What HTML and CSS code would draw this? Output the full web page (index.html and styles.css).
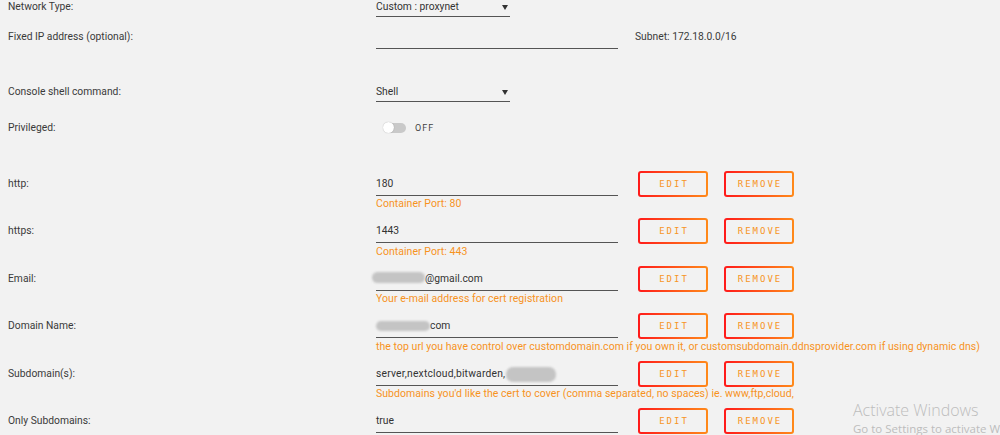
FILE: index.html
```html
<!DOCTYPE html>
<html lang="en">
<head>
<meta charset="utf-8">
<title>Container settings</title>
<link rel="stylesheet" href="styles.css">
</head>
<body>
<div class="form">
  <div class="row row-network">
    <div class="label">Network Type:</div>
    <div class="select select-network">
      <span>Custom : proxynet</span>
      <svg class="caret" width="6" height="6" viewBox="0 0 6 6"><path d="M0 1h6L3 6z" fill="#333"/></svg>
    </div>
  </div>

  <div class="row row-ip">
    <div class="label">Fixed IP address (optional):</div>
    <div class="input"></div>
    <div class="subnet">Subnet: 172.18.0.0/16</div>
  </div>

  <div class="row row-shell">
    <div class="label">Console shell command:</div>
    <div class="select">
      <span>Shell</span>
      <svg class="caret" width="6" height="6" viewBox="0 0 6 6"><path d="M0 1h6L3 6z" fill="#333"/></svg>
    </div>
  </div>

  <div class="row row-priv">
    <div class="label">Privileged:</div>
    <div class="toggle"><span class="track"><span class="knob"></span></span><span class="toggle-text">OFF</span></div>
  </div>

  <div class="vars">
    <div class="var">
      <div class="var-line">
        <div class="label">http:</div>
        <div class="input">180</div>
        <div class="actions"><button class="btn">EDIT</button><button class="btn">REMOVE</button></div>
      </div>
      <div class="hint">Container Port: 80</div>
    </div>

    <div class="var">
      <div class="var-line">
        <div class="label">https:</div>
        <div class="input">1443</div>
        <div class="actions"><button class="btn">EDIT</button><button class="btn">REMOVE</button></div>
      </div>
      <div class="hint">Container Port: 443</div>
    </div>

    <div class="var">
      <div class="var-line">
        <div class="label">Email:</div>
        <div class="input"><span class="redact redact-email"></span>@gmail.com</div>
        <div class="actions"><button class="btn">EDIT</button><button class="btn">REMOVE</button></div>
      </div>
      <div class="hint">Your e-mail address for cert registration</div>
    </div>

    <div class="var">
      <div class="var-line">
        <div class="label">Domain Name:</div>
        <div class="input"><span class="redact redact-domain"></span>com</div>
        <div class="actions"><button class="btn">EDIT</button><button class="btn">REMOVE</button></div>
      </div>
      <div class="hint">the top url you have control over customdomain.com if you own it, or customsubdomain.ddnsprovider.com if using dynamic dns)</div>
    </div>

    <div class="var">
      <div class="var-line">
        <div class="label">Subdomain(s):</div>
        <div class="input input-list">server,nextcloud,bitwarden,<span class="redact redact-sub"></span></div>
        <div class="actions"><button class="btn">EDIT</button><button class="btn">REMOVE</button></div>
      </div>
      <div class="hint">Subdomains you'd like the cert to cover (comma separated, no spaces) ie. www,ftp,cloud,</div>
    </div>

    <div class="var var-last">
      <div class="var-line">
        <div class="label">Only Subdomains:</div>
        <div class="input">true</div>
        <div class="actions"><button class="btn">EDIT</button><button class="btn">REMOVE</button></div>
      </div>
    </div>
  </div>
</div>

<div class="activate">
  <div class="activate-title">Activate Windows</div>
  <div class="activate-sub">Go to Settings to activate Windows.</div>
</div>
</body>
</html>
```

FILE: styles.css
```css
html, body {
  margin: 0;
  padding: 0;
  background: #f2f2f2;
  overflow: hidden;
  width: 1000px;
  height: 435px;
}

body {
  font-family: Roboto, "Liberation Sans", sans-serif;
  font-size: 10.3px;
  color: #3a3a3a;
}

.form {
  padding: 0 0 0 8px;
  margin-top: -3px;
}

.row {
  display: flex;
  align-items: flex-start;
}

.label {
  width: 368px;
  flex: none;
  line-height: 20px;
  color: #3a3a3a;
}

.select,
.input {
  box-sizing: border-box;
  height: 22px;
  line-height: 20px;
  border-bottom: 1px solid #555;
  color: #333;
  white-space: nowrap;
}

.select {
  width: 134px;
  display: flex;
  align-items: center;
  justify-content: space-between;
  padding-right: 2px;
  height: 20px;
}

.caret {
  display: block;
  margin-top: 1px;
}

.input {
  width: 242px;
}

.row-ip {
  margin-top: 10px;
}

.subnet {
  margin-left: 17px;
  line-height: 20px;
  color: #3a3a3a;
}

.row-shell {
  margin-top: 33px;
}

.row-priv {
  margin-top: 16px;
}

.toggle {
  display: flex;
  align-items: center;
  height: 20px;
  margin-left: 8px;
}

.track {
  position: relative;
  display: block;
  width: 22px;
  height: 10px;
  border-radius: 5px;
  background: #c9c9c9;
}

.knob {
  position: absolute;
  left: -1px;
  top: -1px;
  width: 11px;
  height: 11px;
  border-radius: 50%;
  background: #fff;
  box-shadow: 0 0 1px rgba(0, 0, 0, 0.35);
}

.toggle-text {
  margin-left: 9px;
  font-size: 9px;
  letter-spacing: 1px;
  color: #444;
}

.vars {
  margin-top: 33px;
}

.var {
  height: 47.6px;
}

.var-last {
  height: auto;
}

.var-line {
  display: flex;
  align-items: center;
  height: 25px;
}

.var-line .input {
  margin-top: 2px;
}

.actions {
  display: flex;
  gap: 16px;
  margin-left: 20px;
}

.btn {
  box-sizing: border-box;
  width: 70px;
  height: 26px;
  padding: 0;
  border: 2px solid transparent;
  border-radius: 3px;
  background:
    linear-gradient(#f2f2f2, #f2f2f2) padding-box,
    linear-gradient(90deg, #ff1a1a, #ff8a1a) border-box;
  color: #f7951f;
  font-family: "DejaVu Sans Mono", monospace;
  font-size: 9px;
  letter-spacing: 2px;
  text-indent: 2px;
}

.hint {
  margin-left: 368px;
  margin-top: 1px;
  line-height: 14px;
  font-size: 10.5px;
  color: #f7931e;
  white-space: nowrap;
  letter-spacing: 0.05px;
}

.redact {
  display: inline-block;
  vertical-align: middle;
  background: #c4c4c4;
  filter: blur(0.8px);
  border-radius: 6px;
}

.redact-email {
  width: 53px;
  height: 11px;
  margin-left: -4px;
  margin-top: -2px;
}

.redact-domain {
  width: 54px;
  height: 10px;
  margin-top: -2px;
}

.redact-sub {
  width: 50px;
  height: 15px;
  margin-left: 1px;
  border-radius: 7px;
}

.input-list {
  letter-spacing: 0.2px;
}

.activate {
  position: absolute;
  left: 853px;
  top: 399px;
  font-family: "Open Sans", "Noto Sans", sans-serif;
  color: #bdbdbd;
  white-space: nowrap;
}

.activate-title {
  font-size: 16px;
  font-weight: 300;
  line-height: 22px;
}

.activate-sub {
  font-size: 11.5px;
  line-height: 16px;
}
```
